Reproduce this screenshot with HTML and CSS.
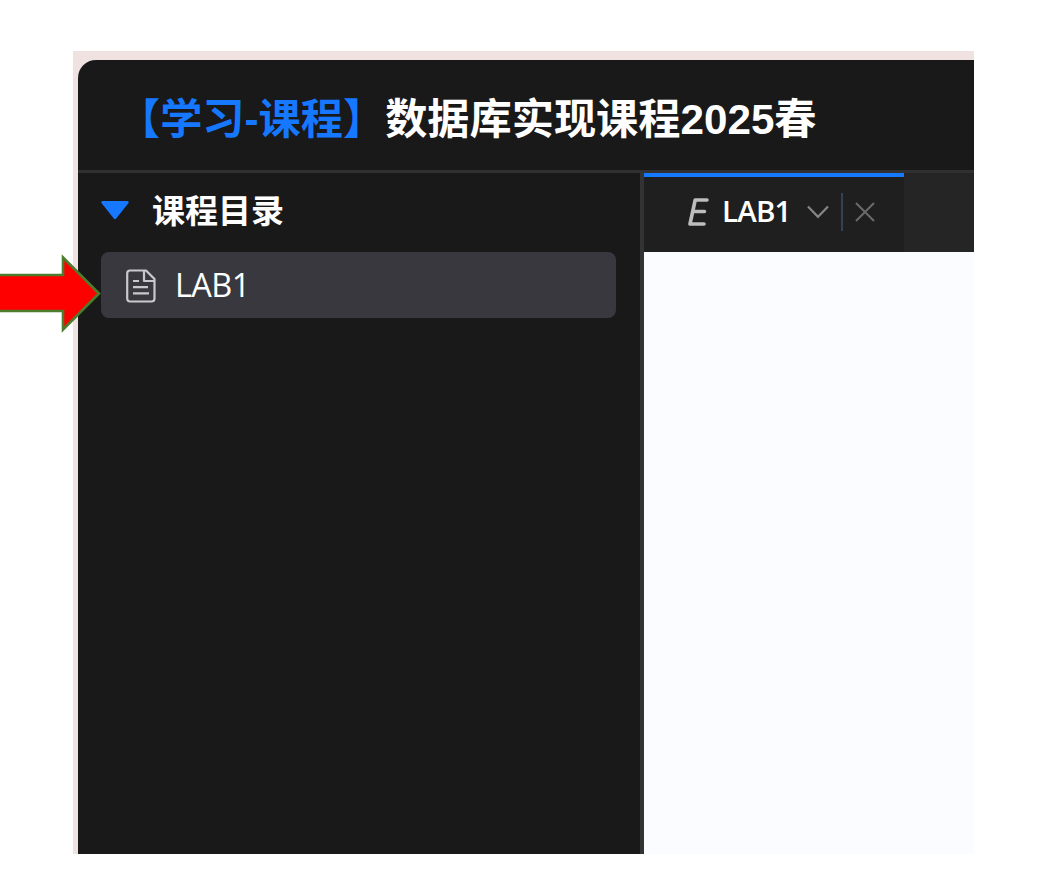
FILE: index.html
```html
<!DOCTYPE html>
<html lang="zh-CN">
<head>
<meta charset="utf-8">
<title>数据库实现课程2025春</title>
<link rel="stylesheet" href="styles.css">
</head>
<body>
<div class="frame">
  <div class="window">
    <header class="header"><h1 class="title"><span class="title-tag">【学习-课程】</span>数据库实现课程2025春</h1></header>
    <div class="body">
      <aside class="sidebar">
        <div class="group">
          <svg class="caret" width="28" height="19" viewBox="0 0 28 19"><path d="M1.5 0h25q2 0.5 .8 2.2L15.2 17.5q-1.2 1.3-2.4 0L.7 2.2Q-.5 .5 1.5 0z" fill="#1677ff"/></svg>
          <span class="group-name">课程目录</span>
        </div>
        <div class="item">
          <svg class="doc" width="30" height="34" viewBox="0 0 30 34" fill="none" stroke="#c9c9cd" stroke-width="2.2" stroke-linejoin="round"><path d="M4 1.500H20L28.500 10V29.500Q28.500 32.500 25.500 32.500H4Q1.200 32.500 1.200 29.500V4.500Q1.200 1.500 4 1.500zM18 1.500V12H28.500M7 12H13M7 18.200H22M7 24.300H23"/></svg>
          <span class="item-name">LAB1</span>
        </div>
      </aside>
      <main class="main">
        <div class="tabs">
          <div class="tab">
            <svg class="type" width="21" height="28" viewBox="0 0 21 28" fill="none" stroke="#bdbdbd" stroke-width="3.6" stroke-linecap="round" stroke-linejoin="round"><path d="M19 2H7.200L2 26H16M4.700 13.500H16.500"/></svg>
            <span class="tab-name">LAB1</span>
            <svg class="down" width="22" height="14" viewBox="0 0 22 14" fill="none" stroke="#858585" stroke-width="2.2"><path d="M1 1.5L11 11.8L21 1.5"/></svg>
            <span class="divider"></span>
            <svg class="close" width="20" height="20" viewBox="0 0 20 20" fill="none" stroke="#6a6a6a" stroke-width="2"><path d="M1 1L19 19M19 1L1 19"/></svg>
          </div>
        </div>
        <div class="content"></div>
      </main>
    </div>
  </div>
</div>
<svg class="pointer" width="102" height="80" viewBox="0 0 102 80"><path d="M-3 22H63V4.500L99 40.500L63 76.500V58H-3z" fill="#f00" stroke="#4c7d2c" stroke-width="2.600"/></svg>
</body>
</html>
```
FILE: styles.css
```css
* { box-sizing: border-box; }
body {
  margin: 0;
  width: 1048px;
  height: 872px;
  overflow: hidden;
  padding: 51px 74px 18px 73px;
  background: #fff;
  font-family: "Liberation Sans", "Noto Sans CJK SC", sans-serif;
  color: #fff;
}
svg { display: block; flex: none; }
.frame {
  height: 803px;
  padding: 9px 0 0 5px;
  background: #efe2e1;
}
.window {
  height: 100%;
  display: flex;
  flex-direction: column;
  overflow: hidden;
  border-radius: 18px 0 0 0;
  background: #191919;
}
.header {
  height: 113px;
  display: flex;
  align-items: center;
  padding: 9px 0 0 40px;
  border-bottom: 3px solid #303030;
}
.title {
  margin: 0;
  font-size: 42.2px;
  line-height: 60px;
  font-weight: 700;
  white-space: nowrap;
  text-spacing-trim: space-all;
}
.title-tag { color: #1677ff; }
.body { flex: 1; display: flex; }
.sidebar {
  width: 566px;
  padding: 0 24px 0 23px;
  border-right: 4px solid #333;
}
.group {
  height: 79px;
  display: flex;
  align-items: center;
  gap: 23px;
}
.caret { margin-bottom: 4px; }
.group-name {
  font-size: 33px;
  font-weight: 700;
  line-height: 40px;
  margin-bottom: 1px;
}
.item {
  height: 66px;
  display: flex;
  align-items: center;
  gap: 19px;
  padding-left: 25px;
  border-radius: 8px;
  background: #39383e;
}
.doc { margin-top: 2px; }
.item-name {
  font-family: "Open Sans", sans-serif;
  font-size: 32.5px;
  font-weight: 500;
  line-height: 40px;
  letter-spacing: -0.6px;
}
.main { flex: 1; display: flex; flex-direction: column; }
.tabs { height: 79px; display: flex; background: #252525; }
.tab {
  width: 260px;
  display: flex;
  align-items: center;
  padding: 0 0 5px 44px;
  border-top: 4px solid #1677ff;
  background: #1f1f1f;
}
.tab-name {
  width: 68px;
  margin: -2px 17px 0 13px;
  font-family: "Open Sans", sans-serif;
  font-size: 29.5px;
  font-weight: 600;
  line-height: 40px;
  letter-spacing: -0.8px;
}
.divider { width: 2px; height: 38px; margin: 0 12px; background: #354154; }
.content { flex: 1; background: #fbfcff; }
.pointer { position: absolute; left: 0; top: 253px; }
```
